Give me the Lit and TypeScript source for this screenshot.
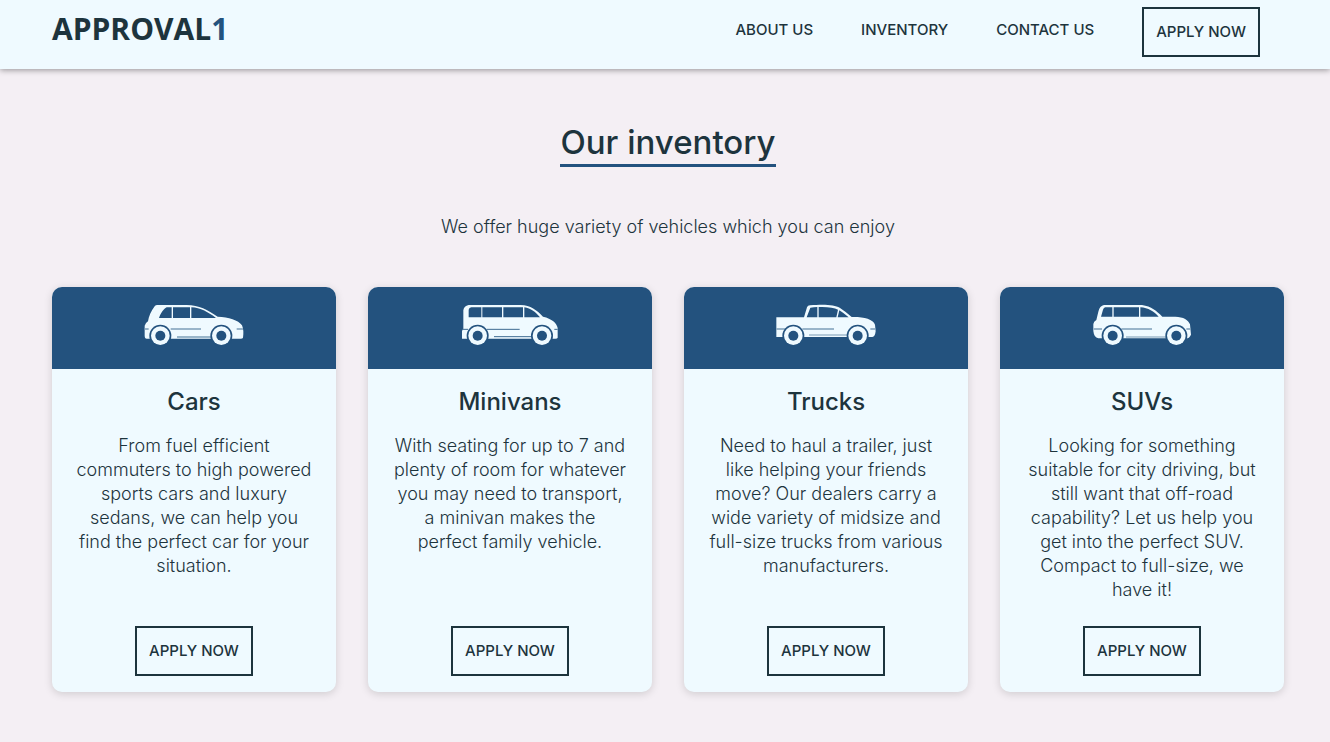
import { LitElement, html, css, svg, type SVGTemplateResult } from "lit";
import { customElement, property } from "lit/decorators.js";

interface Vehicle {
  name: string;
  text: string;
  icon: SVGTemplateResult;
}

// Two wheels with a gap around each of them.
const wheels = (left: number, right: number) => svg`
  ${[left, right].map(
    (x) => svg`
      <circle class="gap" cx=${x} cy="122" r="33" />
      <circle class="body" cx=${x} cy="122" r="28" />
      <circle class="gap" cx=${x} cy="122" r="15" />`
  )}`;

const car = svg`
  <path class="body" d="M70 30H158C196 30 220 45 251 65C284 66 313 75 324 91C329 103 329 114 327 128Q326 131 320 131H38Q32 131 32 122L32 92Q33 85 42 79C44 64 52 47 62 34Q65 30 70 30Z" />
  <path class="gap" d="M98 37H113V69H75C80 55 88 42 98 37ZM117 37H168V69H117ZM172 37C199 38 224 52 246 69H172Z" />
  <path class="trim" d="M32 102H44M110 102H201M308 102H327" />
  <path class="trim" d="M129 126H232" />
  ${wheels(79, 262)}`;

const minivan = svg`
  <path class="body" d="M56 30H212C242 31 260 45 279 65C306 71 320 84 323 99V128Q322 131 316 131H36V108L40 101V46Q42 33 56 30Z" />
  <path class="gap" d="M64 37H94V67H56V44Q57 38 64 37ZM97 37H156V67H97ZM160 37H219V67H160ZM223 37C242 39 258 52 270 67H223Z" />
  <path class="line" d="M36 103H54M110 103H209M313 103H323M132 125H250" />
  ${wheels(83, 276)}`;

const truck = svg`
  <path class="body" d="M31 67H114L123 37Q125 31 132 31C177 27 206 30 221 38Q237 48 257 66C292 65 321 72 327 89L329 109Q327 126 319 126H31Z" />
  <path class="gap" d="M133 38Q144 36 154 36V67H122ZM158 36C185 35 204 38 216 44L211 67H158ZM220 46Q233 54 248 67H215Z" />
  <path class="trim" d="M31 102H61M109 102H204M313 102H328" />
  <path class="soft" d="M129 120H250" />
  ${wheels(82, 275)}`;

const suv = svg`
  <path class="body" d="M66 30H180C208 34 224 48 241 65H280C304 65 320 76 324 88L327 119Q322 130 314 130H49Q36 128 34 108V87Q35 80 43 75L49 50Q53 32 66 30Z" />
  <path class="gap" d="M70 37H91V65H57L63 44Q65 38 70 37ZM95 37H171V65H95ZM175 37C199 38 216 50 230 65H175Z" />
  <path class="trim" d="M35 102H60M118 102H210M313 102H326" />
  <path class="soft" d="M132 126H258" />
  ${wheels(92, 283)}`;

const vehicles: Vehicle[] = [
  {
    name: "Cars",
    icon: car,
    text: "From fuel efficient\ncommuters to high powered\nsports cars and luxury\nsedans, we can help you\nfind the perfect car for your\nsituation.",
  },
  {
    name: "Minivans",
    icon: minivan,
    text: "With seating for up to 7 and\nplenty of room for whatever\nyou may need to transport,\na minivan makes the\nperfect family vehicle.",
  },
  {
    name: "Trucks",
    icon: truck,
    text: "Need to haul a trailer, just\nlike helping your friends\nmove? Our dealers carry a\nwide variety of midsize and\nfull-size trucks from various\nmanufacturers.",
  },
  {
    name: "SUVs",
    icon: suv,
    text: "Looking for something\nsuitable for city driving, but\nstill want that off-road\ncapability? Let us help you\nget into the perfect SUV.\nCompact to full-size, we\nhave it!",
  },
];

const buttonStyles = css`
  .apply {
    box-sizing: border-box;
    height: 50px;
    padding: 0 12px;
    border: 2px solid #1d343d;
    background: transparent;
    color: #1d343d;
    font: 500 15px/24px Inter, sans-serif;
    white-space: nowrap;
    cursor: pointer;
  }
`;

@customElement("vehicle-card")
export class VehicleCard extends LitElement {
  @property({ attribute: false }) vehicle!: Vehicle;

  static styles = [
    buttonStyles,
    css`
      :host {
        display: flex;
        flex-direction: column;
        border-radius: 10px;
        overflow: hidden;
        background: #effaff;
        box-shadow: 0 2px 8px rgba(0, 0, 0, 0.15);
        text-align: center;
      }
      .top {
        display: flex;
        justify-content: center;
        padding: 8px 0 14px;
        background: #23527e;
      }
      .icon {
        width: 120px;
        height: 60px;
      }
      .body {
        fill: #effaff;
      }
      .gap {
        fill: #23527e;
      }
      .trim,
      .line,
      .soft {
        fill: none;
        stroke: #7d9fb9;
        stroke-width: 5;
      }
      .line {
        stroke: #3d6a91;
        stroke-width: 3;
      }
      .soft {
        stroke: #b4cad9;
        stroke-width: 6;
      }
      .content {
        flex: 1;
        display: flex;
        flex-direction: column;
        align-items: center;
        padding: 16px;
      }
      .name {
        margin: 0 0 16px;
        font-size: 24px;
        line-height: 33px;
        font-weight: 500;
      }
      .text {
        flex: 1;
        margin: 0 0 24px;
        font-size: 18px;
        line-height: 24px;
        font-weight: 300;
        white-space: pre-line;
      }
    `,
  ];

  render() {
    const { name, text, icon } = this.vehicle;
    return html`
      <div class="top">
        <svg class="icon" viewBox="0 0 360 180" aria-hidden="true">${icon}</svg>
      </div>
      <div class="content">
        <h2 class="name">${name}</h2>
        <p class="text">${text}</p>
        <button class="apply" type="button">APPLY NOW</button>
      </div>
    `;
  }
}

@customElement("app-root")
export class AppRoot extends LitElement {
  static styles = [
    buttonStyles,
    css`
      :host {
        display: block;
        min-height: 100vh;
        background: #f4eff4;
        color: #1d343d;
        font-family: Inter, sans-serif;
      }
      .header {
        display: flex;
        justify-content: space-between;
        align-items: flex-start;
        padding: 7px 70px 12px 52px;
        background: #effaff;
        box-shadow: 0 1px 6px rgba(0, 0, 0, 0.4);
      }
      .logo {
        color: #1d343d;
        font: 700 30px/44px "Open Sans", sans-serif;
        text-decoration: none;
      }
      .one {
        color: #23527e;
      }
      .nav {
        display: flex;
        gap: 48px;
      }
      .link {
        color: #1d343d;
        font-size: 15px;
        line-height: 46px;
        font-weight: 500;
        text-decoration: none;
      }
      .main {
        display: flex;
        flex-direction: column;
        align-items: center;
        padding: 51px 46px 50px 52px;
      }
      .title {
        margin: 0 0 48px;
        border-bottom: 3px solid #23527e;
        font-size: 33px;
        line-height: 44px;
        font-weight: 500;
      }
      .lead {
        margin: 0 0 48px;
        font-size: 18px;
        line-height: 24px;
        font-weight: 300;
      }
      .cards {
        align-self: stretch;
        display: grid;
        grid-template-columns: repeat(4, 1fr);
        gap: 32px;
      }
    `,
  ];

  render() {
    return html`
      <header class="header">
        <a class="logo" href="#">APPROVAL<span class="one">1</span></a>
        <nav class="nav">
          <a class="link" href="#about">ABOUT US</a>
          <a class="link" href="#inventory">INVENTORY</a>
          <a class="link" href="#contact">CONTACT US</a>
          <button class="apply" type="button">APPLY NOW</button>
        </nav>
      </header>
      <main class="main">
        <h1 class="title">Our inventory</h1>
        <p class="lead">We offer huge variety of vehicles which you can enjoy</p>
        <div class="cards">
          ${vehicles.map((v) => html`<vehicle-card .vehicle=${v}></vehicle-card>`)}
        </div>
      </main>
    `;
  }
}
